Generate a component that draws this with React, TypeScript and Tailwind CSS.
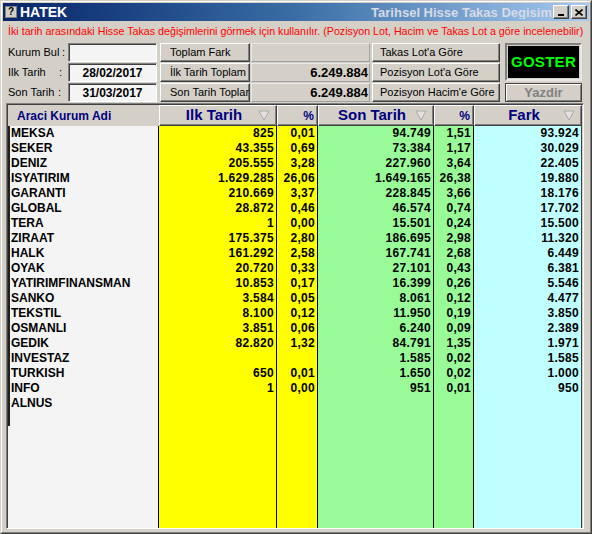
import React from 'react';

const raised =
  'border border-t-white border-l-white border-r-[#404040] border-b-[#404040] shadow-[inset_-1px_-1px_0_#808080]';
const sunken =
  'border border-t-[#808080] border-l-[#808080] border-r-white border-b-white shadow-[inset_1px_1px_0_#404040]';

type Row = { name: string; ilk: string; ilkP: string; son: string; sonP: string; fark: string };

const rows: Row[] = [
  { name: 'MEKSA', ilk: '825', ilkP: '0,01', son: '94.749', sonP: '1,51', fark: '93.924' },
  { name: 'SEKER', ilk: '43.355', ilkP: '0,69', son: '73.384', sonP: '1,17', fark: '30.029' },
  { name: 'DENIZ', ilk: '205.555', ilkP: '3,28', son: '227.960', sonP: '3,64', fark: '22.405' },
  { name: 'ISYATIRIM', ilk: '1.629.285', ilkP: '26,06', son: '1.649.165', sonP: '26,38', fark: '19.880' },
  { name: 'GARANTI', ilk: '210.669', ilkP: '3,37', son: '228.845', sonP: '3,66', fark: '18.176' },
  { name: 'GLOBAL', ilk: '28.872', ilkP: '0,46', son: '46.574', sonP: '0,74', fark: '17.702' },
  { name: 'TERA', ilk: '1', ilkP: '0,00', son: '15.501', sonP: '0,24', fark: '15.500' },
  { name: 'ZIRAAT', ilk: '175.375', ilkP: '2,80', son: '186.695', sonP: '2,98', fark: '11.320' },
  { name: 'HALK', ilk: '161.292', ilkP: '2,58', son: '167.741', sonP: '2,68', fark: '6.449' },
  { name: 'OYAK', ilk: '20.720', ilkP: '0,33', son: '27.101', sonP: '0,43', fark: '6.381' },
  { name: 'YATIRIMFINANSMAN', ilk: '10.853', ilkP: '0,17', son: '16.399', sonP: '0,26', fark: '5.546' },
  { name: 'SANKO', ilk: '3.584', ilkP: '0,05', son: '8.061', sonP: '0,12', fark: '4.477' },
  { name: 'TEKSTIL', ilk: '8.100', ilkP: '0,12', son: '11.950', sonP: '0,19', fark: '3.850' },
  { name: 'OSMANLI', ilk: '3.851', ilkP: '0,06', son: '6.240', sonP: '0,09', fark: '2.389' },
  { name: 'GEDIK', ilk: '82.820', ilkP: '1,32', son: '84.791', sonP: '1,35', fark: '1.971' },
  { name: 'INVESTAZ', ilk: '', ilkP: '', son: '1.585', sonP: '0,02', fark: '1.585' },
  { name: 'TURKISH', ilk: '650', ilkP: '0,01', son: '1.650', sonP: '0,02', fark: '1.000' },
  { name: 'INFO', ilk: '1', ilkP: '0,00', son: '951', sonP: '0,01', fark: '950' },
  { name: 'ALNUS', ilk: '', ilkP: '', son: '', sonP: '', fark: '' },
  { name: '', ilk: '', ilkP: '', son: '', sonP: '', fark: '' },
];

const SortArrow = () => (
  <svg width="12" height="11" viewBox="0 0 12 11" className="shrink-0">
    <polygon points="1,1 11,1 6,10" fill="#e4e2dc" stroke="#a8a8a8" strokeWidth="1" />
  </svg>
);

const DataColumn = ({
  title,
  field,
  width,
  bg,
  percent,
  last,
}: {
  title: string;
  field: keyof Row;
  width: string;
  bg: string;
  percent?: boolean;
  last?: boolean;
}) => (
  <div className={`flex flex-col shrink-0 ${width}`}>
    <div className={`h-[21px] shrink-0 bg-[#d4d0c8] ${raised} flex items-center text-[#000080] font-bold`}>
      {percent ? (
        <span className="ml-auto pr-[3px] text-[12px]">%</span>
      ) : (
        <>
          <span className="flex-1 text-center text-[15px] pl-[10px]">{title}</span>
          <span className="pr-[6px]">
            <SortArrow />
          </span>
        </>
      )}
    </div>
    <div className={`flex-1 ${bg} ${last ? 'border-r border-r-[#404040]' : 'border-r border-r-black'}`}>
      {rows.map((r, i) => (
        <div
          key={i}
          className="h-[15px] leading-[15px] text-right pr-[2px] text-[12px] font-bold tracking-[0.3px] text-black whitespace-nowrap"
        >
          {r[field]}
        </div>
      ))}
    </div>
  </div>
);

const label = 'flex items-center pl-[2px] text-[11px] whitespace-nowrap';
const button = `bg-[#d4d0c8] ${raised} flex items-center text-[11px] overflow-hidden whitespace-nowrap`;
const valueBox =
  'w-[119px] bg-[#d4d0c8] border border-t-[#e8e8e8] border-l-[#e8e8e8] border-r-[#a0a0a0] border-b-[#a0a0a0] flex items-center justify-end pr-[1px] font-bold text-[13px]';

export default function App() {
  return (
    <div
      className="w-[592px] h-[534px] bg-[#d4d0c8] border border-t-[#d4d0c8] border-l-[#d4d0c8] border-r-[#404040] border-b-[#404040] overflow-hidden"
      style={{ fontFamily: '"Liberation Sans", Arial, sans-serif' }}
    >
      <div className="w-full h-full flex flex-col border border-t-white border-l-white border-r-[#808080] border-b-[#808080] p-[1px]">
        {/* Title bar */}
        <div className="h-[18px] shrink-0 flex items-center bg-gradient-to-r from-[#0a246a] via-[#3a6ea5] to-[#a6caf0] pl-[2px] pr-[2px]">
          <div className="w-[12px] h-[12px] bg-[#d4d0c8] border border-[#808080] flex items-center justify-center text-[10px] font-bold leading-none text-black">
            ?
          </div>
          <span className="ml-[3px] text-white font-bold text-[14px] leading-none">HATEK</span>
          <span className="ml-auto text-[#d6dbe6] font-bold text-[13px] whitespace-nowrap overflow-hidden leading-none">
            Tarihsel Hisse Takas Degisim
          </span>
          <div className="flex gap-[2px] ml-[1px]">
            <div className={`w-[16px] h-[14px] bg-[#d4d0c8] ${raised} flex items-end justify-center pb-[2px]`}>
              <div className="w-[6px] h-[2px] bg-black" />
            </div>
            <div className={`w-[16px] h-[14px] bg-[#d4d0c8] ${raised} flex items-center justify-center`}>
              <svg width="8" height="7" viewBox="0 0 8 7">
                <path d="M0.5 0.5 L7.5 6.5 M7.5 0.5 L0.5 6.5" stroke="black" strokeWidth="1.6" />
              </svg>
            </div>
          </div>
        </div>

        <div className="flex-1 flex flex-col px-[3px]">
          {/* Info line */}
          <div className="h-[20px] shrink-0 leading-[20px] pl-[2px] text-[10.7px] text-[#ff0000] whitespace-nowrap overflow-hidden">
            İki tarih arasındaki Hisse Takas değişimlerini görmek için kullanılır. (Pozisyon Lot, Hacim ve Takas Lot a göre incelenebilir)
          </div>

          {/* Controls */}
          <div className="mt-[2px] grid grid-cols-[62px_92px_91px_121px_133px_77px] grid-rows-[19px_19px_19px] gap-y-[1px] text-[12px] text-black">
            <div className={`${label} pr-[3px]`}>
              <span>Kurum Bul</span>
              <span className="ml-auto">:</span>
            </div>
            <div className={`w-[89px] bg-[#f4f4f4] ${sunken}`} />
            <div className={`w-[90px] ${button} pl-[9px]`}>Toplam Fark</div>
            <div className={valueBox} />
            <div className={`w-[128px] ${button} pl-[7px]`}>Takas Lot'a Göre</div>
            <div className="row-span-2 h-[38px] bg-black border-2 border-t-[#808080] border-l-[#808080] border-r-[#e8e8e8] border-b-[#e8e8e8] shadow-[inset_0_0_0_1px_#d4d0c8] flex items-center justify-center">
              <span className="text-[#00ff00] font-bold text-[15px] tracking-[0.3px]">GOSTER</span>
            </div>

            <div className={`${label} pr-[6px]`}>
              <span>Ilk Tarih</span>
              <span className="ml-auto">:</span>
            </div>
            <div className={`w-[89px] bg-[#f4f4f4] ${sunken} flex items-center justify-center font-bold`}>
              28/02/2017
            </div>
            <div className={`w-[90px] ${button} pl-[9px]`}>İlk Tarih Toplam</div>
            <div className={valueBox}>6.249.884</div>
            <div className={`w-[128px] ${button} pl-[7px]`}>Pozisyon Lot'a Göre</div>

            <div className={`${label} pr-[7px]`}>
              <span>Son Tarih</span>
              <span className="ml-auto">:</span>
            </div>
            <div className={`w-[89px] bg-[#f4f4f4] ${sunken} flex items-center justify-center font-bold`}>
              31/03/2017
            </div>
            <div className={`w-[90px] ${button} pl-[9px]`}>Son Tarih Toplam</div>
            <div className={valueBox}>6.249.884</div>
            <div className={`w-[128px] ${button} pl-[7px]`}>Pozisyon Hacim'e Göre</div>
            <div className="h-[19px] bg-[#d4d0c8] border border-[#404040] shadow-[inset_1px_1px_0_white,inset_-1px_-1px_0_#808080] flex items-center justify-center text-[#808080] font-bold text-[13px]">
              Yazdir
            </div>
          </div>

          {/* Grid */}
          <div className={`mt-[1px] mb-[2px] mr-[2px] flex-1 flex bg-[#d4d0c8] ${sunken} p-[1px] pr-0 pb-0`}>
            <div className="w-[151px] shrink-0 flex flex-col">
              <div className="h-[21px] shrink-0 flex items-center pl-[9px] text-[12px] font-bold text-[#000080]">
                Araci Kurum Adi
              </div>
              <div className="flex-1 bg-[#f4f4f4] border-r border-r-black">
                {rows.map((r, i) => (
                  <div
                    key={i}
                    className="h-[15px] leading-[15px] border-l-2 border-l-[#202020] pl-[1px] text-[12px] font-bold text-black whitespace-nowrap"
                  >
                    {r.name}
                  </div>
                ))}
              </div>
            </div>
            <DataColumn title="Ilk Tarih" field="ilk" width="w-[118px]" bg="bg-[#ffff00]" />
            <DataColumn title="%" field="ilkP" width="w-[41px]" bg="bg-[#ffff00]" percent />
            <DataColumn title="Son Tarih" field="son" width="w-[116px]" bg="bg-[#98fb98]" />
            <DataColumn title="%" field="sonP" width="w-[40px]" bg="bg-[#98fb98]" percent />
            <DataColumn title="Fark" field="fark" width="w-[108px]" bg="bg-[#c0ffff]" last />
          </div>
        </div>
      </div>
    </div>
  );
}
